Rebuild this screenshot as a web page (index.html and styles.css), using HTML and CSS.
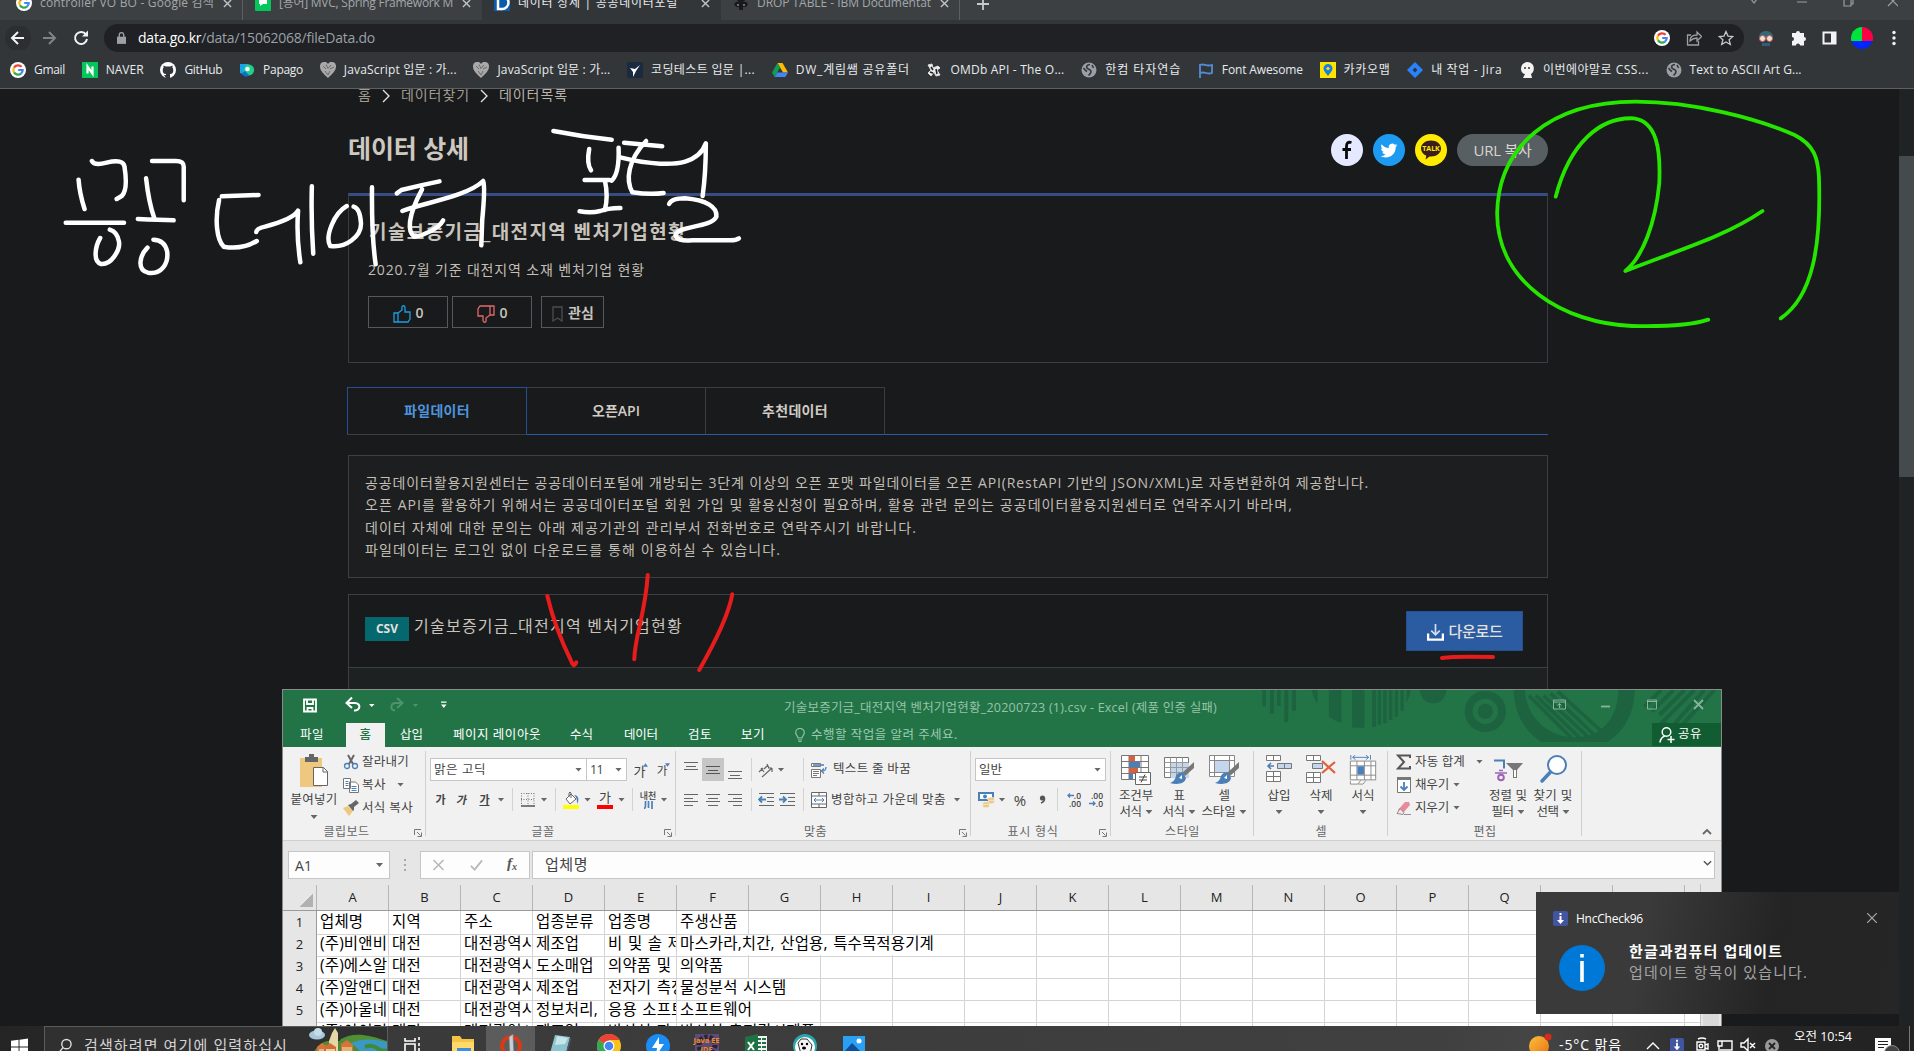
FILE: index.html
```html
<!DOCTYPE html>
<html lang="ko">
<head>
<meta charset="utf-8">
<title>데이터 상세 | 공공데이터포털</title>
<link rel="stylesheet" href="styles.css">
</head>
<body>
<svg class="defs" width="0" height="0">
  <defs>
    <symbol id="google" viewBox="0 0 16 16"><circle cx="8" cy="8" r="8" fill="#fff"/><g fill="none" stroke-width="2.2"><path d="M11.6 4.9A4.7 4.7 0 0 0 4 5.6" stroke="#ea4335"/><path d="M4 5.6a4.7 4.7 0 0 0 0 4.8" stroke="#fbbc05"/><path d="M4 10.4a4.7 4.7 0 0 0 7 1.2" stroke="#34a853"/><path d="M11 11.6A4.7 4.7 0 0 0 12.7 8H8.2" stroke="#4285f4"/></g></symbol>
    <symbol id="globe" viewBox="0 0 16 16"><circle cx="8" cy="8" r="7.500" fill="#9aa0a6"/><path d="M9 2.500c-3 0-4 2-3 3.500s4 1 4 3.500-2 3-2.500 4M2.500 6l2 2.500 1.500 1M11 3l1.500 3" fill="none" stroke="#35363a" stroke-width="1.600"/></symbol>
    <symbol id="heart" viewBox="0 0 16 16"><path d="M8 16C4 12 0 9 0 4.500A4.300 4.300 0 0 1 8 2a4.300 4.300 0 0 1 8 2.500C16 9 12 12 8 16z" fill="#a9a9a9"/><path d="M3 4l3 3M6 2.500l2 4 3-3.500M10 7l4-2M5 9l3 4 2-4" stroke="#6a6a6a" fill="none"/></symbol>
    <symbol id="x" viewBox="0 0 10 10"><path d="M1 1l8 8M9 1L1 9" fill="none" stroke="currentColor" stroke-width="1.500"/></symbol>
    <symbol id="launch" viewBox="0 0 8 8"><path d="M.5 6V.5H7M3 3l3.500 3.500M7.500 3.500v4h-4" fill="none" stroke="#777"/></symbol>
    <symbol id="brush" viewBox="0 0 30 30"><path d="M30 7v6l-9 8-3-3z" fill="#777"/><path d="M19 18a5 5 0 0 0-7 3c-1 4-3 6-6 7 7 2 15 1 16-5z" fill="#4a7fb8"/><path d="M18 20l-3 3 3 1z" fill="#fff"/></symbol>
    <symbol id="hnc" viewBox="0 0 15 15"><rect width="15" height="15" rx="2" fill="#4255a0"/><path d="M6.500 2h2v2h-2zM6.500 5h2v4H11l-3.500 4L4 9h2.500z" fill="#fff"/></symbol>
  </defs>
</svg>
<div class="screen">

<header class="browser">
  <div class="tabstrip">
    <div class="tab"><svg class="i16"><use href="#google"/></svg><span class="tx" data-w="174">controller VO BO - Google 검색</span><svg class="i9"><use href="#x"/></svg></div>
    <div class="tab"><svg class="i16" viewBox="0 0 16 16"><rect width="16" height="16" rx="1" fill="#03c75a"/><path d="M4 3h8v6H8l-3 2V9H4z" fill="#fff"/></svg><span class="tx" data-w="174">[용어] MVC, Spring Framework M</span><svg class="i9"><use href="#x"/></svg></div>
    <div class="tab active"><svg class="i16" viewBox="0 0 16 16"><rect width="16" height="16" fill="#0b5cab"/><path d="M4 1h4a6 6 0 0 1 0 13H4z" fill="none" stroke="#fff" stroke-width="2.500"/></svg><span class="tx" data-w="160">데이터 상세 | 공공데이터포털</span><svg class="i9"><use href="#x"/></svg></div>
    <div class="tab"><svg class="i16" viewBox="0 0 16 16"><path d="M1 9c2-4 12-4 14 0l-2 3H3zM4 6l2-2h4l2 2zM6 12h4v3H6z" fill="#17191a"/><circle cx="5" cy="10" r="1" fill="#888"/><circle cx="11" cy="10" r="1" fill="#888"/></svg><span class="tx" data-w="174">DROP TABLE - IBM Documentat</span><svg class="i9"><use href="#x"/></svg></div>
    <svg class="plus" viewBox="0 0 12 12"><path d="M6 0v12M0 6h12" stroke="#c8cbcd" stroke-width="1.800"/></svg>
    <svg class="winctl" viewBox="0 0 150 14"><g fill="none" stroke="#9a9ea2" stroke-width="1.200"><path d="M3 5l3 4 3-4M49 8h10M96 4h7v8h-7zM98 4V2h7v8h-2M140 2l10 10M150 2l-10 10"/></g></svg>
  </div>
  <div class="toolbar">
    <svg class="nav" viewBox="0 0 90 24"><circle cx="18" cy="12" r="13" fill="#2c2f32"/><g fill="none" stroke-width="2"><path d="M24 12H12.500M18 6l-6 6 6 6" stroke="#f1f3f4"/><path d="M43 12h12M49 6l6 6-6 6" stroke="#7f8488"/><path d="M86 8.500A6 6 0 1 0 87 13" stroke="#f1f3f4"/></g><path d="M88 4.500v6h-6z" fill="#f1f3f4"/></svg>
    <div class="omnibox">
      <svg class="lock" viewBox="0 0 10 14"><path d="M0 5h10v8H0z" fill="#9aa0a6"/><path d="M2.500 6V3a2.500 2.500 0 0 1 5 0v3" fill="none" stroke="#9aa0a6" stroke-width="1.500"/></svg>
      <span class="url" data-w="237"><b>data.go.kr</b>/data/15062068/fileData.do</span>
      <span class="grow"></span>
      <svg class="i16"><use href="#google"/></svg>
      <svg class="i16" viewBox="0 0 16 16"><path d="M5 5H1.500v10h11V11M4 11c0-4 3-6 7-6V2l4.500 4.500L11 11V8C8 8 6 9 4 11z" fill="none" stroke="#9aa0a6" stroke-width="1.300"/></svg>
      <svg class="i16" viewBox="0 0 16 16"><path d="M8 1.500l2 4.600 4.800.4-3.700 3.200 1.200 4.800L8 11.900l-4.300 2.600 1.200-4.800L1.200 6.500 6 6.100z" fill="none" stroke="#c3c7ca" stroke-width="1.300"/></svg>
    </div>
    <div class="exts">
      <svg class="i16" viewBox="0 0 16 16"><path d="M1 7c0-8 14-8 14 0z" fill="#33677a"/><circle cx="4.500" cy="8.500" r="3" fill="#e8e2e0" stroke="#d05b45"/><circle cx="11.500" cy="8.500" r="3" fill="#e8e2e0" stroke="#d05b45"/><path d="M4 13h8v3H4z" fill="#2f5f80"/></svg>
      <svg class="i16" viewBox="0 0 16 16"><path d="M2 3h4a2 2 0 1 1 4 0h4v4a2 2 0 1 1 0 4v4.500h-4a2 2 0 0 0-4 0H2V11a2 2 0 0 0 0-4z" fill="#f1f3f4"/></svg>
      <svg class="i16" viewBox="0 0 16 16"><path d="M1.500 2.500h12v11h-12z" fill="none" stroke="#f1f3f4" stroke-width="2"/><path d="M9 2h5v12H9z" fill="#f1f3f4"/></svg>
      <svg class="avatar" viewBox="0 0 22 22"><path d="M11 14V0A11 11 0 0 0 .4 14z" fill="#00e23c"/><path d="M11 14V0a11 11 0 0 1 10.600 14z" fill="#ff0044"/><path d="M.4 14h21.200A11 11 0 0 1 .4 14z" fill="#0026ff"/></svg>
      <svg class="dots" viewBox="0 0 4 16"><g fill="#f1f3f4"><circle cx="2" cy="2.500" r="1.700"/><circle cx="2" cy="8" r="1.700"/><circle cx="2" cy="13.500" r="1.700"/></g></svg>
    </div>
  </div>
  <nav class="bookmarks">
    <a><svg class="i16"><use href="#google"/></svg><span data-w="31">Gmail</span></a>
    <a><svg class="i16" viewBox="0 0 16 16"><rect width="16" height="16" fill="#03c75a"/><path d="M5.500 11.500v-7l5 7v-7" fill="none" stroke="#fff" stroke-width="2.200"/></svg><span data-w="38">NAVER</span></a>
    <a><svg class="i16" viewBox="0 0 16 16"><circle cx="8" cy="8" r="8" fill="#fff"/><path d="M6 16v-3c-2 .5-2.500-.5-3-1.300M10 16v-4c2.500 0 3.300-1.500 3.300-4 0-1-.4-1.800-.8-2.200V3.500L10.300 4.500H5.700L3.500 3.500v2.300C3 6.300 2.700 7 2.700 8c0 2.500.9 4 3.300 4v4z" fill="#323639"/></svg><span data-w="38">GitHub</span></a>
    <a><svg class="i16" viewBox="0 0 16 16"><path d="M1 2h8l5 5-3 1-2 6-8-3z" fill="#19a5e8"/><path d="M7 3a5 5 0 0 1 5 10l-5 1-3-6z" fill="#20d08a"/><path d="M2 12l5 3 3-2-4-4z" fill="#0b6fd0"/><circle cx="8.500" cy="7" r="2.300" fill="#fff"/></svg><span data-w="40">Papago</span></a>
    <a><svg class="i16"><use href="#heart"/></svg><span data-w="113">JavaScript 입문 : 가...</span></a>
    <a><svg class="i16"><use href="#heart"/></svg><span data-w="113">JavaScript 입문 : 가...</span></a>
    <a><svg class="i16" viewBox="0 0 16 16"><rect width="16" height="16" rx="2" fill="#1b2a41"/><path d="M3 6l5 1 5-4-4 6-3 6 0-5z" fill="#fff"/></svg><span data-w="104">코딩테스트 입문 |...</span></a>
    <a><svg class="i16" viewBox="0 0 16 16"><path d="M5.500 1h5L16 10.500h-5z" fill="#fbbc04"/><path d="M5.500 1L0 10.500 2.700 15 8 5.500z" fill="#0f9d58"/><path d="M2.700 15L5.300 10.500H16L13.300 15z" fill="#4285f4"/></svg><span data-w="114">DW_계림쌤 공유폴더</span></a>
    <a><svg class="i16" viewBox="0 0 16 16"><path d="M2 3l4-1 1 4 5-2 2 2-3 2 3 5-4 1-2-4-3 4-3-3 3-3z" fill="#eee" stroke="#ddd"/><path d="M5 5l2 3M10 7l1 5M4 10l3 1" stroke="#222" stroke-width="1.600"/></svg><span data-w="114">OMDb API - The O...</span></a>
    <a><svg class="i16"><use href="#globe"/></svg><span data-w="76">한컴 타자연습</span></a>
    <a><svg class="i16" viewBox="0 0 16 16"><path d="M2 16V2M2 3c4-2 6 2 12 0v8c-5 2-7-2-12 0" fill="none" stroke="#528dd7" stroke-width="1.800"/></svg><span data-w="81">Font Awesome</span></a>
    <a><svg class="i16" viewBox="0 0 16 16"><rect width="16" height="16" fill="#fee500"/><path d="M8 14C4 9 3.500 8 3.500 6.500a4.500 4.500 0 0 1 9 0C12.500 8 12 9 8 14z" fill="#1a7fe0"/><circle cx="8" cy="6.500" r="1.600" fill="#fee500"/></svg><span data-w="47">카카오맵</span></a>
    <a><svg class="i16" viewBox="0 0 16 16"><path d="M8 0l8 8-8 8-8-8z" fill="#2684ff"/><path d="M8 5.500L10.500 8 8 10.500 5.500 8z" fill="#323639"/></svg><span data-w="71">내 작업 - Jira</span></a>
    <a><svg class="i16" viewBox="0 0 16 16"><path d="M3 3c3-4 8-4 11 0 2 4 0 8-2 9l1 4H4l2-4C2 11 1 7 3 3z" fill="#f4f4f4"/><circle cx="6" cy="6" r="1" fill="#333"/><circle cx="10" cy="6" r="1" fill="#333"/></svg><span data-w="106">이번에야말로 CSS...</span></a>
    <a><svg class="i16"><use href="#globe"/></svg><span data-w="112">Text to ASCII Art G...</span></a>
  </nav>
</header>

<main class="viewport">
  <div class="page">
    <div class="crumbs"><span data-w="14">홈</span><svg viewBox="0 0 8 14"><path d="M1 1l6 6-6 6"/></svg><span data-w="69">데이터찾기</span><svg viewBox="0 0 8 14"><path d="M1 1l6 6-6 6"/></svg><span class="here" data-w="69">데이터목록</span></div>
    <div class="head">
      <h1 data-w="121">데이터 상세</h1>
      <div class="share">
        <svg viewBox="0 0 32 32"><circle cx="16" cy="16" r="16" fill="#e4e9ff"/><path d="M20.500 8.500c-4-1-5 1-5 4V25M11.500 15.500h8.500" fill="none" stroke="#0a0a0a" stroke-width="2.800"/></svg>
        <svg viewBox="0 0 32 32"><circle cx="16" cy="16" r="16" fill="#1d9bf0"/><path d="M24.500 11.200c-.6.300-1.300.5-2 .6.700-.5 1.200-1.100 1.500-1.900-.7.400-1.400.7-2.200.8a3.500 3.500 0 0 0-6 3.200c-2.900-.1-5.500-1.500-7.200-3.700-.9 1.700-.4 3.600 1.100 4.700-.6 0-1.100-.2-1.600-.4 0 1.800 1.200 3.200 2.800 3.500-.5.100-1 .2-1.600.1.400 1.400 1.700 2.400 3.300 2.400A7 7 0 0 1 7.500 22c5.700 3.400 15.300.7 15.200-9 .7-.5 1.300-1.100 1.800-1.800z" fill="#fff"/></svg>
        <div class="talk"><svg viewBox="0 0 32 32"><circle cx="16" cy="16" r="16" fill="#ffeb00"/><path d="M16 6.500c5.600 0 10 3.500 10 8s-4.400 8-10 8l-1.500 0-4 3 .8-3.800C8.100 20.400 6 17.700 6 14.500c0-4.500 4.400-8 10-8z" fill="#3b1d1d"/></svg><b>TALK</b></div>
        <button><span data-w="58">URL 복사</span></button>
      </div>
    </div>
    <section class="summary">
      <h2 data-w="318">기술보증기금_대전지역 벤처기업현황</h2>
      <p data-w="277">2020.7월 기준 대전지역 소재 벤처기업 현황</p>
      <div class="votes">
        <span class="vote"><svg viewBox="0 0 18 18"><path d="M1 8h4v9H1zM5 8l4-3V2c0-2 3-1.500 3 .5V7h5v7l-2 3H5" fill="none" stroke="#1d9fe0" stroke-width="1.300"/></svg>0</span>
        <span class="vote"><svg viewBox="0 0 18 18"><path d="M17 10h-4V1h4zM13 10l-4 3v3c0 2-3 1.500-3-.5V11H1V4l2-3h10" fill="none" stroke="#e06a6a" stroke-width="1.300"/></svg>0</span>
        <span class="vote keep"><svg viewBox="0 0 12 16"><path d="M1 1h9v14l-4.500-3L1 15z" fill="none" stroke="#4a4e50" stroke-width="1.300"/></svg><span data-w="26">관심</span></span>
      </div>
    </section>
    <div class="tabs"><span class="on"><i data-w="66">파일데이터</i></span><span><i data-w="48">오픈API</i></span><span><i data-w="66">추천데이터</i></span><em></em></div>
    <section class="note">
      <p data-w="1004">공공데이터활용지원센터는 공공데이터포털에 개방되는 3단계 이상의 오픈 포맷 파일데이터를 오픈 API(RestAPI 기반의 JSON/XML)로 자동변환하여 제공합니다.</p>
      <p data-w="928">오픈 API를 활용하기 위해서는 공공데이터포털 회원 가입 및 활용신청이 필요하며, 활용 관련 문의는 공공데이터활용지원센터로 연락주시기 바라며,</p>
      <p data-w="552">데이터 자체에 대한 문의는 아래 제공기관의 관리부서 전화번호로 연락주시기 바랍니다.</p>
      <p data-w="416">파일데이터는 로그인 없이 다운로드를 통해 이용하실 수 있습니다.</p>
    </section>
    <section class="file">
      <div class="filehead">
        <span class="csv">CSV</span><span class="fname" data-w="269">기술보증기금_대전지역 벤처기업현황</span>
        <button class="dl"><svg viewBox="0 0 18 18"><path d="M9 0v10M4.500 7L9 11.500 13.500 7" fill="none" stroke="#cfe0f5" stroke-width="1.800"/><path d="M1.200 10v6.500h15.600V10" fill="none" stroke="#fff" stroke-width="2.400"/></svg><span data-w="54">다운로드</span></button>
      </div>
    </section>
  </div>
  <div class="scroll"><div class="thumb"></div></div>
</main>

<svg class="ink" viewBox="0 0 1914 700">
  <g class="white" transform="translate(40 80) scale(.4592 .33333)">
    <path d="M113 243Q118 258 145 248Q182 236 184 260Q192 330 178 348L167 357M84 299Q86 340 97 387M56 428H183M131 474C120 500 115 545 133 552C155 555 175 510 172 485Q168 455 152 449"/>
    <path d="M244 243H296Q314 243 313 262V361M231 295Q237 370 249 415M213 417Q260 420 291 421M234 503C215 530 212 570 235 578C265 585 280 550 277 515Q272 480 247 479"/>
    <path d="M396 349L476 345M390 360C380 420 385 480 400 500Q440 510 472 483M471 456Q472 445 490 440C530 425 555 410 562 392Q558 470 567 547M592 319Q590 420 595 521"/>
    <path d="M668 378C640 400 620 470 632 498C665 505 700 470 699 430Q697 385 683 380M723 322Q722 470 731 553"/>
    <path d="M777 340L787 330Q830 315 870 304M832 328C800 410 800 455 815 470C840 465 868 445 878 421M789 393C830 370 930 350 965 303Q970 320 963 420L961 496"/>
    <path d="M1118 153Q1180 170 1245 179M1196 207Q1190 250 1200 271M1260 203Q1262 280 1245 302M1186 300H1240M1230 300Q1238 350 1230 390M1175 394Q1200 400 1220 393Q1235 385 1264 384"/>
    <path d="M1272 188L1355 199M1320 183C1280 240 1275 300 1290 337Q1330 345 1358 339M1266 233C1330 255 1380 255 1405 245Q1440 230 1450 190Q1450 280 1443 348M1370 372Q1375 355 1405 355C1450 360 1475 380 1473 410C1460 445 1390 435 1384 465Q1385 485 1420 481H1500Q1515 482 1522 475"/>
  </g>
  <g class="green" transform="translate(1300 80) scale(.35714 .33333)">
    <path d="M1143 719C1090 738 1010 740 930 738C740 730 552 610 552 400C555 200 700 65 940 65C1100 65 1280 115 1385 165C1440 195 1450 235 1453 290C1460 500 1435 650 1346 715"/>
    <path d="M716 350C755 190 840 110 935 115C1000 125 1010 210 1006 310C995 430 960 530 911 573C1060 510 1190 470 1295 393"/>
  </g>
  <g class="red" transform="translate(340 380) scale(.40816 .33333)">
    <path d="M508 648C520 710 545 790 567 845Q573 865 579 847M754 585C748 700 722 770 721 838M961 643Q950 720 880 870"/>
  </g>
  <path class="red" d="M1442 658Q1455 656 1493 657"/>
</svg>

<section class="excel">
  <div class="xtitle">
    <svg class="deco" viewBox="0 15 1445 171" preserveAspectRatio="none"><g fill="#1d6340"><path d="M67 15h11v49H67zM90 15h12v72H90zM111 15h11v48h-11zM133 15h12v97h-12zM156 15h12v62h-12z"/><path d="M215 15h18v40Q220 40 215 15zM267 15h38v100q-22-8-38-20zM337 15h37v113h-37zM397 15h12v110h-12zM414 15h10v104h-10zM430 15h11v100h-11zM447 15h11v90h-11zM465 15h10v80h-10zM482 15h10v62h-10zM500 15h14q-4 20-14 38z"/><path d="M539 15h82q-8 40-41 40t-41-40z"/><circle cx="737" cy="79" r="23"/><path d="M822 15h34C858 90 920 155 1003 157S1135 100 1137 15h49C1184 80 1160 135 1104 171H905C850 135 824 80 822 15z"/></g><circle cx="737" cy="79" r="50" fill="none" stroke="#1d6340" stroke-width="24"/><path d="M868 32L995 158M889 32L1020 158M912 32L1045 155M933 25L1065 150M955 20L1085 138" fill="none" stroke="#1d6340" stroke-width="11"/><path d="M1215 65l50-50M1237 80l65-65M1260 90l75-75M1250 130l115-115M1240 150l40-40M1285 140l110-125M1310 140l115-125" stroke="#1d6340" stroke-width="12"/></svg>
    <div class="xbar">
      <svg class="qat" viewBox="283 0 170 30"><g fill="none" stroke="#fff" stroke-width="2"><path d="M304 9.500h12v12h-12zM307 10v4h6v-4M307.500 22v-4h5v4" stroke-width="1.800"/><path d="M347 13h8c6 0 6 8-1 7.500M352 7.500l-5.500 5.500 5.500 5"/><path d="M402 13h-6c-6 0-6 7-1 7.500M397 8l5.500 5-5.500 5" stroke="#4f9270"/></g><path d="M369 14h5.500l-2.700 3z" fill="#fff"/><path d="M413 14h5l-2.500 3z" fill="#4f9270"/><path d="M441 14.500h5.500l-2.700 3.500zM441 11.500h5.500v1.300H441z" fill="#fff"/></svg>
      <span class="xname" data-w="433">기술보증기금_대전지역 벤처기업현황_20200723 (1).csv - Excel (제품 인증 실패)</span>
      <svg class="xctl" viewBox="0 0 154 14"><g fill="none" stroke="#86b59b"><path d="M.5 2h12v9H.5zM.5 4h12M6.500 10V5.500M4.500 7.500l2-2 2 2"/><path d="M48 8.500h9" stroke-width="1.800"/><path d="M94.500 2h9v9h-9zM94.500 3.500h9"/><path d="M141 2l9 9M150 2l-9 9" stroke-width="1.800"/></g></svg>
    </div>
    <div class="xtabs">
      <span class="t1" data-w="24">파일</span><b><i data-w="12">홈</i></b><span class="t2" data-w="23">삽입</span><span class="t3" data-w="88">페이지 레이아웃</span><span class="t4" data-w="23">수식</span><span class="t5" data-w="34">데이터</span><span class="t6" data-w="24">검토</span><span class="t7" data-w="24">보기</span>
      <svg class="bulb" viewBox="0 0 10 14"><path d="M3 10C3 8 .7 7 .7 4.700a4.300 4.300 0 0 1 8.600 0C9.300 7 7 8 7 10zM3 12h4M3.500 13.500h3" fill="none" stroke="#8fc1a2" stroke-width="1.200"/></svg>
      <span class="tell" data-w="147">수행할 작업을 알려 주세요.</span>
      <span class="xshare"><svg viewBox="0 0 16 16"><circle cx="7.500" cy="5" r="4.300"/><path d="M1 15.500c.5-4 3-6 5-6.500M12 9v7M8.500 12.500h7"/></svg><i data-w="24">공유</i></span>
    </div>
  </div>

  <div class="ribbon">
    <div class="grp g1"><div class="body row">
      <div class="big w60"><svg viewBox="0 0 30 38"><path d="M1 4h22v29H1z" fill="#edc87e"/><path d="M6 8V3h4V0h5v3h4v5z" fill="#666"/><path d="M14.500 13.500h10l4 4v14h-14z" fill="#fff" stroke="#666"/><path d="M24 13.500V18h4.500" fill="none" stroke="#666"/></svg><span data-w="47">붙여넣기</span><i class="car"></i></div>
      <div class="list">
        <div><svg viewBox="0 0 16 16"><path d="M5 1l5 9M11 1l-5 9" stroke="#666" stroke-width="2"/><g fill="none" stroke="#4a7fb8" stroke-width="1.300"><circle cx="4" cy="12" r="2.500"/><circle cx="12" cy="12" r="2.500"/></g></svg><span data-w="47">잘라내기</span></div>
        <div><svg viewBox="0 0 16 16"><path d="M.5 1.500h7v10h-7zM6.500 5h6l3 3v7.500h-9z" fill="#fff" stroke="#777"/><path d="M2.500 4.500h3M2.500 6.500h3M2.500 8.500h3M8.500 9.500h5M8.500 11.500h5M8.500 13.500h5" stroke="#4a7fb8"/></svg><span data-w="24">복사</span><i class="car m9"></i></div>
        <div><svg viewBox="0 0 16 16"><path d="M0 8l5-2 5 5-4 5z" fill="#edc87e"/><path d="M5 5l3-1 5-4 3 3-5 4 0 3-1 1z" fill="#666"/></svg><span data-w="51">서식 복사</span></div>
      </div></div>
      <div class="lab"><span data-w="46">클립보드</span><svg><use href="#launch"/></svg></div></div>

    <div class="grp g2"><div class="body">
      <div class="r1"><span class="combo w157"><i data-w="52">맑은 고딕</i><i class="car"></i></span><span class="combo w40"><i data-w="13">11</i><i class="car"></i></span><span class="c w27 ga big">가<svg viewBox="0 0 6 4"><path d="M0 4l3-4 3 4z" fill="#4a7fb8"/></svg></span><span class="c w17 ga">가<svg viewBox="0 0 6 4"><path d="M0 0l3 4 3-4z" fill="#4a7fb8"/></svg></span></div>
      <div class="r2"><b class="c w21">가</b><b class="c w22 it">가</b><b class="c w23 un"><u>가</u></b><span class="c w10"><i class="car"></i></span><span class="c w12"><i class="sep"></i></span>
        <span class="c w20"><svg width="14" height="14" viewBox="0 0 14 14"><path d="M.5 0v13M7 0v13M13 0v13M0 .5h13M0 6.500h13" stroke="#777" stroke-dasharray="1 1.500"/><path d="M0 13h14" stroke="#555" stroke-width="1.500"/></svg></span><span class="c w12"><i class="car"></i></span><span class="c w10"><i class="sep"></i></span>
        <span class="c w22"><svg width="17" height="18" viewBox="0 0 17 18"><path d="M8 3l5 5-6 5-4-5z" fill="#fff" stroke="#666"/><path d="M6 6V2q1-2 2 0v5" fill="none" stroke="#666"/><path d="M11 4c4 0 6 4 3 9 0-4 0-6-3-9z" fill="#4a7fb8"/><path d="M0 14h16v4H0z" fill="#ff0"/></svg></span><span class="c w11"><i class="car"></i></span>
        <span class="c w24 fc">가<i></i></span><span class="c w9"><i class="car"></i></span><span class="c w12"><i class="sep"></i></span>
        <span class="c w20 nc">내천<svg viewBox="0 0 9 8"><path d="M1.500 0v4q0 3-1.500 4M4.500 0v7M8 0v8" fill="none" stroke="#4a7fb8" stroke-width="1.700"/></svg></span><span class="c w12"><i class="car"></i></span></div></div>
      <div class="lab"><span data-w="23">글꼴</span><svg><use href="#launch"/></svg></div></div>

    <div class="grp g3"><div class="body">
      <div class="r1"><span class="c w22"><svg width="14" height="20" viewBox="0 0 14 20"><path d="M0 2.500h14M2 6.500h10M0 9.500h14" stroke="#666"/></svg></span><span class="c w22 on"><svg width="14" height="20" viewBox="0 0 14 20"><path d="M0 6.500h14M2 10.500h10M0 13.500h14" stroke="#555"/></svg></span><span class="c w22"><svg width="14" height="20" viewBox="0 0 14 20"><path d="M0 11.500h14M2 15.500h10M0 18.500h14" stroke="#666"/></svg></span><span class="c w10"><i class="sep"></i></span>
        <span class="c w20"><svg width="16" height="16" viewBox="0 0 16 16"><path d="M1 10l4-4M3 6l3 4M6 7l4-4M9 2l2 4M4 15L14 6M14 6v4M14 6h-4" fill="none" stroke="#666" stroke-width="1.200"/></svg></span><span class="c w10"><i class="car"></i></span><span class="c w12"></span><span class="c w10"><i class="sep"></i></span>
        <span class="c w22"><svg width="16" height="16" viewBox="0 0 16 16"><path d="M.5 1.500h9v3h-9zM.5 7.500h9v8h-9z" fill="#fff" stroke="#777"/><path d="M2 9.500h6M2 11.500h6M2 13.500h4" stroke="#777"/><path d="M2 3h11M15 5c0 4-2 4-4 4M13 6.500L10.500 9l2.500 2.500" fill="none" stroke="#4a7fb8" stroke-width="1.300"/></svg></span><span class="txt" data-w="78">텍스트 줄 바꿈</span></div>
      <div class="r2"><span class="c w22"><svg width="14" height="12" viewBox="0 0 14 12"><path d="M0 .5h14M0 4.500h9M0 7.500h14M0 11.500h9" stroke="#666"/></svg></span><span class="c w22"><svg width="14" height="12" viewBox="0 0 14 12"><path d="M0 .5h14M2 4.500h10M0 7.500h14M2 11.500h10" stroke="#666"/></svg></span><span class="c w22"><svg width="14" height="12" viewBox="0 0 14 12"><path d="M0 .5h14M5 4.500h9M0 7.500h14M5 11.500h9" stroke="#666"/></svg></span><span class="c w10"><i class="sep"></i></span>
        <span class="c w20"><svg width="16" height="13" viewBox="0 0 16 13"><path d="M1 .5h15M9 4.500h7M9 8.500h7M1 12.500h15" stroke="#666"/><path d="M8 6.500H1M4 3.500l-3 3 3 3" fill="none" stroke="#4a7fb8" stroke-width="1.800"/></svg></span><span class="c w22"><svg width="16" height="13" viewBox="0 0 16 13"><path d="M1 .5h15M9 4.500h7M9 8.500h7M1 12.500h15" stroke="#666"/><path d="M0 6.500h7M4 3.500l3 3-3 3" fill="none" stroke="#4a7fb8" stroke-width="1.800"/></svg></span><span class="c w10"><i class="sep"></i></span>
        <span class="c w22"><svg width="16" height="16" viewBox="0 0 16 16"><path d="M.5.500h15v15H.5zM.5 4h15M.5 12h15M8 .5V4M8 12v3.500" fill="#fff" stroke="#666"/><path d="M3 8h10M5 6L3 8l2 2M11 6l2 2-2 2" fill="none" stroke="#4a7fb8"/></svg></span><span class="txt t-merge" data-w="115">병합하고 가운데 맞춤</span><span class="c w22"><i class="car"></i></span></div></div>
      <div class="lab"><span data-w="23">맞춤</span><svg><use href="#launch"/></svg></div></div>

    <div class="grp g4"><div class="body">
      <div class="r1"><span class="combo w131"><i data-w="23">일반</i><i class="car"></i></span></div>
      <div class="r2"><span class="c w22"><svg width="17" height="17" viewBox="0 0 17 17"><path d="M0 1h16v9H0z" fill="#4a7fb8"/><path d="M2 3h12v5H2z" fill="#fff"/><circle cx="7" cy="5.500" r="2" fill="#4a7fb8"/><g fill="#edc87e" stroke="#f1f1f1" stroke-width=".7"><ellipse cx="13" cy="8" rx="3.500" ry="1.800"/><ellipse cx="13" cy="11" rx="3.500" ry="1.800"/><ellipse cx="8" cy="12.500" rx="3.500" ry="1.800"/><ellipse cx="8" cy="15" rx="3.500" ry="1.800"/></g></svg></span><span class="c w10"><i class="car"></i></span><span class="c w26 pct">%</span><span class="c w18"><svg width="7" height="9" viewBox="0 0 7 9"><circle cx="3.500" cy="3" r="2.600" fill="#555"/><path d="M5.500 3q.5 3.500-3.500 5" fill="none" stroke="#555" stroke-width="1.400"/></svg></span><span class="c w12"><i class="sep"></i></span><span class="c w18 dec"><span><svg width="7" height="5" viewBox="0 0 7 5"><path d="M7 2.500H1M3 .5l-2 2 2 2" fill="none" stroke="#4a7fb8" stroke-width="1.300"/></svg>.0</span><span>.00</span></span><span class="c w4"></span><span class="c w18 dec"><span>.00</span><span><svg width="7" height="5" viewBox="0 0 7 5"><path d="M0 2.500h6M4 .5l2 2-2 2" fill="none" stroke="#4a7fb8" stroke-width="1.300"/></svg>.0</span></span></div></div>
      <div class="lab"><span data-w="51">표시 형식</span><svg><use href="#launch"/></svg></div></div>

    <div class="grp g5"><div class="body row">
      <div class="big w46"><svg viewBox="0 0 30 30"><path d="M.5.500h27v24H.5zM.5 6.500h27M.5 12.500h27M.5 18.500h27M8 .5v24M20 .5v24" fill="#fff" stroke="#777"/><path d="M8 1h6v5H8zM8 13h9v5H8z" fill="#d9603f"/><path d="M8 7h11v5H8zM8 19h4v5H8z" fill="#4a7fb8"/><path d="M14.500 17.500h15v12h-15z" fill="#fff" stroke="#666"/><path d="M18 22h8M18 25h8M24 19.500l-4 8" stroke="#444"/></svg><span data-w="34">조건부</span><span class="wc"><i data-w="22">서식</i><i class="car"></i></span></div>
      <div class="big w40"><svg viewBox="0 0 30 30"><path d="M.5 2.500h24v20H.5z" fill="#fff" stroke="#777"/><path d="M7 8h18v15H7z" fill="#c3d6eb"/><path d="M.5 7.500h24M.5 12.500h24M.5 17.500h24M6.500 2.500v20M12.500 2.500v20M18.500 2.500v20" stroke="#999" fill="none"/><use href="#brush"/></svg><span data-w="11">표</span><span class="wc"><i data-w="22">서식</i><i class="car"></i></span></div>
      <div class="big w50"><svg viewBox="0 0 30 30"><path d="M.5.500h25v21H.5zM.5 5.500h25M.5 17.500h25M5.500.500v21M20.500.500v21" fill="#fff" stroke="#888"/><path d="M6 6h14v11H6z" fill="#c3d6eb"/><use href="#brush"/></svg><span data-w="11">셀</span><span class="wc"><i data-w="34">스타일</i><i class="car"></i></span></div></div>
      <div class="lab"><span data-w="35">스타일</span></div></div>

    <div class="grp g6"><div class="body row">
      <div class="big w42"><svg viewBox="0 0 30 30"><path d="M2.500.500h14v5h-14zM9.500.500v5M2.500 16.500h14v10h-14zM2.500 21.500h14M9.500 16.500v10" fill="#fff" stroke="#777"/><path d="M13.500 8.500h14v5h-14zM20.500 8.500v5" fill="#c3d6eb" stroke="#777"/><path d="M10 11H4M7 8l-3 3 3 3" fill="none" stroke="#4a7fb8" stroke-width="1.600"/></svg><span data-w="23">삽입</span><i class="car"></i></div>
      <div class="big w42"><svg viewBox="0 0 30 30"><path d="M.5.500h14v5H.5zM7.500.500v5M.5 17.500h14v10H.5zM.5 22.500h14M7.500 17.500v10" fill="#fff" stroke="#777"/><path d="M6.500 8.500h10v5h-10z" fill="#c3d6eb" stroke="#777"/><path d="M16 6l13 12M29 7L16 18" stroke="#e0603c" stroke-width="2.200"/></svg><span data-w="23">삭제</span><i class="car"></i></div>
      <div class="big w42"><svg viewBox="0 0 30 32"><path d="M1.500 6.500h27v20h-27zM1.500 11.500h27M1.500 21.500h27M8.500 6.500v20M16.500 6.500v20M23.500 6.500v20M1.500 28v3h8l3-4M10 31h5l3-4" fill="#fff" stroke="#888"/><path d="M9 12h7v9H9z" fill="#4a7fb8"/><path d="M2 0v5M23 0v5M4 2.500h17M7 0L4 2.500 7 5M18 0l3 2.500L18 5" fill="none" stroke="#4a7fb8"/></svg><span data-w="23">서식</span><i class="car"></i></div></div>
      <div class="lab"><span data-w="11">셀</span></div></div>

    <div class="grp g7"><div class="body row">
      <div class="list">
        <div><svg viewBox="0 0 16 16"><path d="M14 4V1.500H2L8 8l-6 6.500h12V12" fill="none" stroke="#555" stroke-width="2"/></svg><span data-w="50">자동 합계</span><i class="car m9"></i></div>
        <div><svg viewBox="0 0 16 16"><path d="M1.500.500h13v15h-13z" fill="#fff" stroke="#777"/><path d="M1 0h14v3H1z" fill="#777"/><path d="M8 5v8M4.500 9.500L8 13l3.500-3.500" fill="none" stroke="#4a7fb8" stroke-width="1.800"/></svg><span data-w="34">채우기</span><i class="car m4"></i></div>
        <div><svg viewBox="0 0 16 16"><path d="M2 10L9 2h4l1 3-7 8H4z" fill="#e98a9c"/><path d="M1 13.500l3-5 4 4-1 2zM8 14.500h7" stroke="#777" fill="#fbe3e8" stroke-width=".8"/></svg><span data-w="34">지우기</span><i class="car m4"></i></div>
      </div>
      <div class="big w46"><svg viewBox="0 0 30 30"><path d="M1 5.500h10v8" fill="none" stroke="#4a7fb8" stroke-width="2"/><path d="M6 15.500h4M2 18h12" stroke="#9a63b8" stroke-width="1.600"/><circle cx="8" cy="22.500" r="2.800" fill="none" stroke="#9a63b8" stroke-width="2"/><path d="M13 8h17l-6 7v8h-4v-8z" fill="#777"/><path d="M21 15v7h2v-7z" fill="#fff"/></svg><span data-w="38">정렬 및</span><span class="wc"><i data-w="22">필터</i><i class="car"></i></span></div>
      <div class="big w44"><svg viewBox="0 0 30 30"><circle cx="19" cy="10" r="9" fill="#fff" stroke="#4a7fb8" stroke-width="2"/><path d="M12.500 17L4 26" stroke="#4a7fb8" stroke-width="3.500" stroke-linecap="round"/></svg><span data-w="39">찾기 및</span><span class="wc"><i data-w="22">선택</i><i class="car"></i></span></div></div>
      <div class="lab"><span data-w="23">편집</span></div></div>
    <svg class="collapse" viewBox="0 0 10 7"><path d="M1 6l4-4 4 4" fill="none" stroke="#666" stroke-width="1.800"/></svg>
  </div>

  <div class="fbar">
    <span class="nbox"><i data-w="17">A1</i><i class="car"></i></span>
    <svg class="fdots" viewBox="0 0 2 12"><path d="M0 0h2v2H0zM0 5h2v2H0zM0 10h2v2H0z" fill="#a8a8a8"/></svg>
    <span class="fbtn"><svg viewBox="0 0 12 12"><path d="M1 1l10 10M11 1L1 11" stroke="#b9b9b9" stroke-width="1.600"/></svg><svg viewBox="0 0 14 12"><path d="M1 7l4 4 8-10" fill="none" stroke="#b9b9b9" stroke-width="2"/></svg><em>f<sub>x</sub></em></span>
    <span class="fval"><i data-w="43">업체명</i><svg viewBox="0 0 10 7"><path d="M1 1l4 4 4-4" fill="none" stroke="#555" stroke-width="1.600"/></svg></span>
  </div>

  <div class="sheetwrap">
    <div class="sheet">
      <div class="hr"><span class="corner"></span><span>A</span><span>B</span><span>C</span><span>D</span><span>E</span><span>F</span><span>G</span><span>H</span><span>I</span><span>J</span><span>K</span><span>L</span><span>M</span><span>N</span><span>O</span><span>P</span><span>Q</span><span></span><span></span><span></span></div>
      <div class="sr"><b>1</b><span>업체명</span><span>지역</span><span>주소</span><span>업종분류</span><span>업종명</span><span>주생산품</span><span></span><span></span><span></span><span></span><span></span><span></span><span></span><span></span><span></span><span></span><span></span><span></span><span></span><span></span></div>
      <div class="sr"><b>2</b><span>(주)비앤비</span><span>대전</span><span>대전광역시</span><span>제조업</span><span>비 및 솔 제</span><span class="s4">마스카라,치간, 산업용, 특수목적용기계</span><span></span><span></span><span></span><span></span><span></span><span></span><span></span><span></span><span></span><span></span><span></span></div>
      <div class="sr"><b>3</b><span>(주)에스알</span><span>대전</span><span>대전광역시</span><span>도소매업</span><span>의약품 및</span><span>의약품</span><span></span><span></span><span></span><span></span><span></span><span></span><span></span><span></span><span></span><span></span><span></span><span></span><span></span><span></span></div>
      <div class="sr"><b>4</b><span>(주)알앤디</span><span>대전</span><span>대전광역시</span><span>제조업</span><span>전자기 측정</span><span class="s2">물성분석 시스템</span><span></span><span></span><span></span><span></span><span></span><span></span><span></span><span></span><span></span><span></span><span></span><span></span><span></span></div>
      <div class="sr"><b>5</b><span>(주)아울네</span><span>대전</span><span>대전광역시</span><span>정보처리,</span><span>응용 소프트</span><span class="s2">소프트웨어</span><span></span><span></span><span></span><span></span><span></span><span></span><span></span><span></span><span></span><span></span><span></span><span></span><span></span></div>
      <div class="sr"><b></b><span>(주)아이리</span><span>대전</span><span>대전광역시</span><span>제조업</span><span>방사선 장</span><span class="s2">방사선 측정감시제품</span><span></span><span></span><span></span><span></span><span></span><span></span><span></span><span></span><span></span><span></span><span></span><span></span><span></span></div>
    </div>
    <div class="xscroll"><i></i></div>
  </div>
</section>

<aside class="toast">
  <div class="thead"><svg class="i15"><use href="#hnc"/></svg><span data-w="67">HncCheck96</span><svg class="tx-close" viewBox="0 0 10 10"><path d="M0 0l10 10M10 0L0 10" stroke="#aaa" stroke-width="1.200"/></svg></div>
  <div class="tbody">
    <svg class="info" viewBox="0 0 46 46"><circle cx="23" cy="23" r="23" fill="#0078d7"/><path d="M21.200 9h3.600v3.500h-3.600zM21.200 16h3.600v21h-3.600z" fill="#fff"/></svg>
    <div><strong data-w="154">한글과컴퓨터 업데이트</strong><p data-w="179">업데이트 항목이 있습니다.</p></div>
  </div>
</aside>

<footer class="taskbar">
  <div class="start"><svg viewBox="0 0 18 18"><path d="M0 2.500l8-1.200V8.500H0zM9 1.200L18 0v8.500H9zM0 9.500h8v7.200L0 15.500zM9 9.500h9V18l-9-1.200z" fill="#fff"/></svg></div>
  <div class="search">
    <svg class="mag" viewBox="0 0 14 16"><circle cx="8" cy="6" r="5" fill="none" stroke="#ddd" stroke-width="1.500"/><path d="M4.500 9.500L0 15" stroke="#ddd" stroke-width="1.500"/></svg>
    <span data-w="204">검색하려면 여기에 입력하십시</span>
    <svg class="art" viewBox="0 0 78 30"><path d="M32 12c12-7 26-5 46 2v16H20z" fill="#4f8f35"/><path d="M42 16c12-5 24-4 36-1v15H34z" fill="#3b98c4"/><path d="M2 30c4-8 8-14 16-16h18c10 3 16 10 18 16z" fill="#4c8a35"/><path d="M8 20l5-4 6 4v10H8zM32 17l6-4 6 5v12H32z" fill="#d8733c"/><path d="M10 22h8v8h-8zM33 20h10v10H33z" fill="#e6b274"/><path d="M20 14l3-8 3-5 3 5v24h-9z" fill="#e5d6a6"/><path d="M15 20l6-4 6 4v10H15z" fill="#cf6c38"/><path d="M17 22h9v8h-9z" fill="#f0c890"/><ellipse cx="8" cy="8" rx="8" ry="4.500" fill="#a9c7da"/><circle cx="9" cy="5" r="4" fill="#c4dbe8"/><path d="M56 20q7-3 12 1t10 2" stroke="#3d8a3a" stroke-width="4" fill="none"/></svg>
  </div>
  <div class="apps">
    <span><svg viewBox="0 0 24 24"><path d="M4 4v3h10V4M4 10h10v8H4zM18 3v3M18 9v3M18 14v5" fill="none" stroke="#fff" stroke-width="1.600"/></svg></span>
    <span><svg viewBox="0 0 24 24"><path d="M2 2h8l2 3h12v17H2z" fill="#f5c445"/><path d="M2 8h22v14H2z" fill="#ffda6b"/><path d="M7 14h14v8H7z" fill="#3c8ede"/></svg></span>
    <span class="cur"><svg viewBox="0 0 24 24"><circle cx="12" cy="12" r="9" fill="none" stroke="#d63b16" stroke-width="4"/><path d="M10 3l4-3 1 22-4 2z" fill="#c6cdd3" stroke="#777" stroke-width=".6"/></svg></span>
    <span><svg viewBox="0 0 24 24"><path d="M7 1l15 2-5 20H1z" fill="#8cc3cf"/><path d="M9 2l11 2-3 6-10 1z" fill="#c4e5ea"/><path d="M22 3l1 2-5 19-1-1z" fill="#556"/></svg></span>
    <span><svg viewBox="0 0 24 24"><circle cx="12" cy="12" r="12" fill="#fbc116"/><path d="M12 12L1.600 6A12 12 0 0 0 11 24z" fill="#34a853"/><path d="M1.600 6A12 12 0 0 1 22.400 6H12v6z" fill="#ea4335"/><circle cx="12" cy="12" r="5.500" fill="#fff"/><circle cx="12" cy="12" r="4.300" fill="#4285f4"/></svg></span>
    <span><svg viewBox="0 0 24 24"><circle cx="12" cy="12" r="12" fill="#1b8df2"/><path d="M13 3l-7 11h5l-1 8 8-12h-5z" fill="#fff"/></svg></span>
    <span class="jee"><svg viewBox="0 0 24 24"><path d="M0 0h24v24H0z" fill="#5a4b78"/><circle cx="12" cy="11" r="8" fill="none" stroke="#2a2230" stroke-width="5" stroke-dasharray="3 2"/></svg><em>Java EE<br>IDE</em></span>
    <span><svg viewBox="0 0 24 24"><path d="M12 2h11v20H12z" fill="#f2f2f2"/><path d="M14 5h3M18 5h4M14 9h3M18 9h4M14 13h3M18 13h4M14 17h3M18 17h4" stroke="#1f7244" stroke-width="2"/><path d="M1 3l13-3v24L1 21z" fill="#1f7244"/><path d="M4 8l6 8M10 8l-6 8" stroke="#fff" stroke-width="2"/></svg></span>
    <span><svg viewBox="0 0 24 24"><circle cx="12" cy="12" r="12" fill="#2aa6ae"/><circle cx="12" cy="13" r="10" fill="#fff"/><path d="M5 9l3-4 6 0 5 6-2 10-4-2-5 1z" fill="#f4f4f4" stroke="#333"/><circle cx="9" cy="10" r="1.200"/><circle cx="14" cy="10" r="1.200"/><ellipse cx="11" cy="14" rx="2" ry="1.500"/></svg></span>
    <span><svg viewBox="0 0 24 24"><path d="M1 2h22v21H1z" fill="#2aa0f2"/><path d="M1 19l9-10 13 13v2H1z" fill="#0f4e9c"/><circle cx="17" cy="7" r="2.500" fill="#fff"/></svg></span>
  </div>
  <div class="tray">
    <svg class="sun" viewBox="0 0 24 24"><defs><linearGradient id="sg" x1="0" y1="0" x2="1" y2="1"><stop offset="0" stop-color="#f7c33c"/><stop offset="1" stop-color="#ee6f12"/></linearGradient></defs><circle cx="11" cy="14" r="10" fill="url(#sg)"/><circle cx="20" cy="5" r="3.500" fill="#d52b1e"/></svg>
    <span class="wx" data-w="63">-5°C 맑음</span>
    <svg class="ticons" viewBox="1640 1030 145 24"><g fill="none" stroke="#fff" stroke-width="1.400"><path d="M1647 1049l6-6 6 6M1697 1042h8v8h-8zM1705 1045l3-1v5l-3-1M1698 1039q4-2 8 0"/><circle cx="1701" cy="1046" r="1.800"/><path d="M1720 1041h12v9h-12M1718 1041h4v5h-4zM1719 1046v5M1741 1043h3l4-4v12l-4-4h-3zM1750 1043l5 5M1755 1043l-5 5"/></g><use href="#hnc" x="1670" y="1038" width="14" height="14"/><circle cx="1772" cy="1046" r="7" fill="#999"/><path d="M1769 1043l6 6M1775 1043l-6 6" stroke="#222" stroke-width="1.800"/></svg>
    <div class="clock"><span data-w="58">오전 10:54</span><span data-w="64">2022-11-30</span></div>
    <svg class="noti" viewBox="0 0 26 20"><path d="M0 3h16v13H0z" fill="#fff"/><path d="M3 6.500h10M3 9.500h10M3 12.500h6" stroke="#222"/><circle cx="17" cy="18" r="7.500" fill="#444" stroke="#888"/></svg>
    <i class="edge"></i>
  </div>
</footer>
</div>
<script src="fit.js"></script>
</body>
</html>
```
FILE: styles.css
```css
*{box-sizing:border-box}
body,h1,h2,p{margin:0}
body{background:#181a1b;font-family:"Open Sans","Noto Sans CJK KR",sans-serif;font-size:14px;color:#c8c3bc}
i{font-style:normal}
svg{display:block;flex:none}
use{color:inherit}
button{border:0;font-family:inherit;padding:0}
[data-w]{display:inline-block;white-space:nowrap;flex:none}
.defs{position:absolute}
.screen{position:relative;width:1914px;height:1051px;overflow:hidden}
.i16{width:16px;height:16px}
.i15{width:15px;height:15px}
.i9{width:9px;height:9px}
.grow{flex:1}

/* browser frame */
.browser{height:89px;background:#323639;border-bottom:1px solid #5d6164}
.tabstrip{display:flex;height:20px;align-items:flex-end;background:#3c4043;padding-left:4px;overflow:hidden}
.tab{flex:none;width:239px;height:34px;display:flex;align-items:center;padding:0 10px 0 12px;gap:8px;color:#a3a7aa;font-size:12px;border-right:1px solid #5c6063}
.tab .i9{margin-left:auto;color:#c0c3c6}
.tab .tx{line-height:20px}
.tab.active{background:#323639;color:#e8eaed;border-color:transparent}
.tab:nth-child(2){border-color:transparent;border-radius:0 0 8px 0}
.plus{width:12px;height:12px;margin:0 0 10px 17px}
.winctl{width:150px;height:14px;margin:0 16px 12px auto}
.toolbar{height:36px;display:flex;align-items:center}
.nav{width:90px;height:24px}
.omnibox{width:1640px;height:28px;margin-left:14px;background:#202124;border-radius:14px;display:flex;align-items:center;padding:0 10px 0 13px;gap:16px}
.lock{width:9px;height:13px}
.url{margin-left:-4px;line-height:20px;color:#9aa0a6;font-size:14px}
.url b{font-weight:400;color:#fff}
.exts{display:flex;align-items:center;gap:16px;padding-left:14px}
.avatar{width:22px;height:22px;margin-left:-3px}
.dots{width:4px;height:16px;margin-left:3px}
.bookmarks{height:28px;display:flex;align-items:center;gap:16.700px;padding-left:10px;color:#e8eaed;font-size:12px;line-height:20px}
.bookmarks a{display:flex;align-items:center;gap:8px}

/* page */
.viewport{display:flex;justify-content:space-between;height:962px;overflow:hidden}
.page{width:1200px;margin-left:348px}
.crumbs{display:flex;height:12px;align-items:center;gap:10px;padding-left:10px;font-size:14px;line-height:20px;color:#a39b8f}
.crumbs svg{width:8px;height:14px;margin:1px 1px 0 0;fill:none;stroke:#e8e6e3;stroke-width:1.300}
.crumbs .here{color:#b9b2a8}
.head{height:92px;display:flex;justify-content:space-between;align-items:center;padding-top:1px}
h1{font-size:25px;line-height:30px;color:#cdc8c0;margin-bottom:-1px}
.share{display:flex;gap:10px;align-items:center;margin-bottom:-4px}
.share svg{width:32px;height:32px}
.talk{position:relative}
.talk b{position:absolute;left:0;right:0;top:11px;text-align:center;font-size:7px;line-height:8px;color:#ffeb00}
.share button{width:91px;height:32px;border-radius:16px;background:#585f63;color:#d8d4cf;font-size:15px;line-height:30px}
.summary{height:170px;border:1px solid #3a3e40;border-top:3px solid #384c86;padding:23px 19px 0 20px}
h2{font-size:19px;line-height:26px;color:#c8c3bc}
.summary p{display:block;margin:14px 0 0 -1px;font-size:14px;line-height:22px;color:#c3beb6}
.votes{display:flex;gap:4px;margin:15px 0 0 -1px}
.vote{width:80px;height:32px;border:1px solid #55595b;display:flex;align-items:center;justify-content:center;gap:4px;font-weight:600;font-size:14px;padding-left:1px}
.vote>svg{width:18px;height:18px;margin-top:3px}
.vote.keep{width:63px;margin-left:5px}
.vote.keep svg{width:12px;height:16px}
.tabs{display:flex;margin:24px 0 0 -1px;height:48px}
.tabs>span{width:179px;border:1px solid #3a3e40;border-left:0;border-bottom:1px solid #2c5aa3;display:flex;align-items:center;justify-content:center;font-weight:600;font-size:14px;line-height:20px;padding-bottom:1px;color:#d0cbc4}
.tabs .on{width:180px;border:1px solid #264f92;border-bottom-color:#3a3e40;color:#4f94dd}
.tabs em{flex:1;border-bottom:1px solid #2c5aa3}
.note{margin-top:20px;height:123px;border:1px solid #3c4041;background:#1c1e1f;padding:16px 16px}
.note p{display:block;height:22.400px;line-height:22.400px;font-size:14px;color:#c3beb6}
.file{margin-top:16px;height:400px;border:1px solid #3c4041;background:#1d2122}
.filehead{height:73px;background:#181a1b;border-bottom:1px solid #3c4041;display:flex;padding-left:16px}
.csv{width:44px;height:24px;margin-top:22px;background:#06686f;color:#e4e2de;font-weight:700;font-size:12px;line-height:24px;text-align:center}
.fname{margin:19px 0 0 5px;font-size:16px;line-height:24px}
.dl{width:117px;height:40px;margin:16px 24px 0 auto;background:#2b5ba1;border:1px solid #244f90;display:flex;align-items:center;justify-content:center;gap:5px;color:#e6e3df;font-weight:500;font-size:15px;line-height:22px}
.dl svg{width:17px;height:17px;margin-top:3px}
.scroll{width:15px;background:#1f2324;padding-top:67px}
.thumb{height:321px;background:#454a4d}

/* drawn annotations */
.ink{position:absolute;left:0;top:0;width:1914px;height:700px}
.ink path{fill:none;stroke-linecap:round;stroke-linejoin:round;vector-effect:non-scaling-stroke}
.white path{stroke:#fff;stroke-width:4.500}
.green path{stroke:#26e600;stroke-width:3.800}
.red path{stroke:#e81c1c;stroke-width:4}
path.red{stroke:#e81c1c;stroke-width:4}

/* spreadsheet window */
.excel{position:absolute;left:282px;top:689px;width:1440px;height:362px;border:1px solid #8a8a8a;border-bottom:0;background:#e6e6e6;color:#444;font-size:12.500px}
.xtitle{position:relative;height:57px;background:#227447}
.deco{position:absolute;right:0;top:0;width:481px;height:57px}
.xbar{position:relative;height:33px;display:flex;padding:0}
.qat{width:170px;height:30px}
.xname{margin:8px 0 0 331px;line-height:20px;font-size:12.500px;color:#97c3a8}
.xctl{width:154px;height:14px;margin:8px 14px 0 auto}
.xtabs{position:relative;display:flex;height:24px;line-height:23px;color:#fff;padding-left:17px}
.xtabs b{width:39px;margin:0 0 0 22px;background:#f1f1f1;color:#227447;text-align:center;font-weight:500}
.t2{margin-left:15px}.t3{margin-left:30px}.t4{margin-left:29px}.t5{margin-left:31px}.t6{margin-left:30px}.t7{margin-left:29px}
.bulb{width:10px;height:14px;margin:5px 0 0 30px}
.tell{margin-left:6px;color:#9ecab0}
.xshare{margin-left:auto;width:69px;height:23px;line-height:22px;background:#115c30;display:flex;align-items:center;padding-left:7px;gap:3px}
.xshare i{margin-top:-1px}
.xshare svg{width:16px;height:16px;fill:none;stroke:#fff;stroke-width:1.500}
.ribbon{position:relative;display:flex;height:94px;background:#f1f1f1;border-bottom:1px solid #d2d0ce}
.grp{height:93px;flex:none;display:flex;flex-direction:column;background:linear-gradient(#d0d0d0,#d0d0d0) right 4px/1px 85px no-repeat}
.g1{width:143px}.g2{width:250px}.g3{width:295px}.g4{width:140px}.g5{width:143px}.g6{width:134px}.g7{width:194px}
.grp{background-position:right 4px;background-size:1px 85px}
.body{height:75px}
.row{display:flex}
.g5 .row{padding-left:2px}.g6 .row{padding-left:4px}.g7 .row{padding-left:8px}
.lab{display:flex;line-height:20px;height:18px;font-size:12px;color:#666;justify-content:center}
.lab span{margin:0 auto}
.lab svg{width:8px;height:8px;margin:7px 4px 0 4px}
.big{display:flex;flex-direction:column;align-items:center;padding-top:8px;line-height:16px}
.big>svg{width:30px;height:30px;margin-bottom:3px}
.g1 .big>svg{height:38px;margin:0}
.g1 .big{padding-top:7px}
.g1 .big .car{margin-top:7px}
.big>.car{margin-top:6px}
.wc{display:flex;align-items:center;gap:4px}
.list{padding-top:3px;width:89px}
.g1 .list{width:82px}
.list>div{height:23px;display:flex;align-items:center;gap:3px;line-height:20px}
.list svg{width:16px;height:16px}
.m9{margin-left:8px}.m4{margin-left:1px}
.car{width:7px;height:4px;flex:none;background:#666;clip-path:polygon(0 0,100% 0,50% 100%)}
.r1{display:flex;height:23px;margin:11px 0 0 4px}
.r2{display:flex;height:21px;margin:8px 0 0 4px}
.c{display:flex;align-items:center;justify-content:center;flex:none;line-height:20px}
.on.c{background:#c6c6c6}
.sep{width:1px;height:23px;background:#d2d2d2;flex:none}
.txt{margin-left:3px;line-height:22px}
.t-merge{margin-left:1px}
.combo{display:flex;align-items:center;justify-content:space-between;background:#fff;border:1px solid #c6c6c6;padding:0 4px 0 3px;line-height:21px;flex:none}
.w40{width:41px;margin-left:-1px}
.big.w40{margin:0;width:40px}
.w4{width:4px}.w9{width:9px}.w10{width:10px}.w11{width:11px}.w12{width:12px}.w17{width:17px}.w18{width:18px}.w20{width:20px}.w21{width:21px}.w22{width:22px}.w23{width:23px}.w24{width:24px}.w26{width:26px}.w27{width:28px}.w42{width:42px}.w44{width:44px}.w46{width:46px}.w50{width:50px}.w60{width:62px}.w131{width:131px}.w157{width:157px}
.w60+.list{margin-left:-2px}
.ga{font-size:11.500px;align-items:flex-end;flex-direction:row;padding:0;line-height:20px}
.ga.big{font-size:13px}
.ga svg,.ga.big>svg{width:5px;height:4px;margin:0 0 14px -2px}
.r2 b{font-size:11px}
.it{transform:skewX(-12deg)}
.fc{flex-direction:column;font-size:13px;line-height:16px;justify-content:flex-start}
.fc i{width:16px;height:4px;background:#f00}
.nc{flex-direction:column;font-size:9px;line-height:10px;font-weight:500}
.nc svg{width:9px;height:8px}
.pct{font-size:15px}
.dec{flex-direction:column;align-items:flex-end;font-size:8.500px;line-height:8px;font-weight:600}
.dec span{display:flex;align-items:center;white-space:nowrap}
.collapse{width:10px;height:7px;margin:81px 9px 0 auto}
.fbar{display:flex;height:43px;padding:10px 6px 6px 5px}
.fbar>span{height:28px;background:#fdfdfd;border:1px solid #c6c6c6;display:flex;align-items:center}
.nbox{width:102px;justify-content:space-between;padding:0 6px 0 6px;font-size:14px}
.fdots{width:2px;height:12px;margin:8px 14px 0 14px}
.fbtn{width:110px;padding:0 12px 0 11px;justify-content:space-between}
.fbtn svg{width:13px;height:12px}
.fbtn em{font-family:"Liberation Serif",serif;font-size:15px;font-weight:700;line-height:20px;color:#555}
.fbtn sub{font-size:10px;vertical-align:-2px}
.fval{flex:1;margin-left:2px;justify-content:space-between;padding:0 2px 3px 12px;font-size:15px}
.fval svg{width:9px;height:7px}
.sheetwrap{display:flex;height:200px}
.sheet{width:1417px;overflow:hidden;background:#fff}
.hr,.sr{display:grid;grid-template-columns:34px repeat(20,72px);width:1474px}
.hr{height:27px;background:#e6e6e6;border-bottom:1px solid #9b9b9b;color:#222;font-size:13px}
.hr span{border-right:1px solid #b5b5b5;text-align:center;line-height:25px;margin-top:1px}
.corner{background:linear-gradient(135deg,transparent 50%,#b1b1b1 50%) right 3px bottom 3px/14px 14px no-repeat}
.sr{height:22px}
.sr b{font-weight:400;font-size:13px;text-align:center;background:#e6e6e6;border-right:1px solid #9b9b9b;border-bottom:1px solid #c4c4c4;line-height:23px;color:#222}
.sr span{border-right:1px solid #d4d4d4;border-bottom:1px solid #d4d4d4;padding-left:3px;font-size:15.500px;line-height:21px;letter-spacing:.15px;word-spacing:1.300px;color:#000;overflow:hidden;white-space:nowrap}
.s2{grid-column:span 2}
.s4{grid-column:span 4}
.xscroll{width:21px;background:#e6e6e6;border-left:1px solid #c0c0c0;padding:8px 2px 0}
.xscroll i{display:block;height:180px;background:#d9d9d9;border-top:1px solid #ababab}

/* notification */
.toast{position:absolute;left:1536px;top:892px;width:363px;height:122px;background:linear-gradient(100deg,#3a3a3a 30%,#242424 65%,#262626);color:#fff;padding-left:17px}
.thead{display:flex;align-items:center;height:50px;padding:3px 22px 0 0;font-size:12px;line-height:20px}
.thead span{margin-left:8px}
.tx-close{width:10px;height:10px;margin:-2px 0 0 auto}
.tbody{display:flex;padding:3px 0 0 6px}
.info{width:46px;height:46px}
.tbody div{margin:-4px 0 0 24px}
.tbody strong{display:block;font-size:15px;line-height:21px}
.tbody p{display:block;font-size:15px;line-height:20px;color:#a3a3a3}

/* taskbar */
.taskbar{position:absolute;left:0;top:1026px;width:1914px;height:25px;overflow:hidden;display:flex;background:linear-gradient(90deg,#242424,#3a3a3a 20%,#404040 75%,#454545 80%,#262626 92%,#222)}
.start{width:44px;padding:12px 0 0 11px}
.start svg{width:17px;height:18px}
.search{width:344px;height:40px;border:1px solid #5b5b5b;background:#303030;display:flex;color:#d4d4d4;font-size:15px;line-height:37px;padding-left:14px}
.mag{width:13px;height:16px;margin-top:11px}
.search span{margin-left:12px}
.art{width:78px;height:30px;margin-left:auto}
.apps{display:flex}
.apps span{width:49px;height:40px;display:flex;justify-content:center;padding-top:8px}
.apps span svg{width:24px;height:24px}
.apps .cur{background:#5c5c5c}
.jee{position:relative}
.jee em{position:absolute;left:8px;right:8px;top:10px;text-align:center;font-size:7.500px;line-height:9px;font-weight:700;font-style:normal;color:#f08a24;white-space:nowrap}
.tray{display:flex;margin-left:auto;width:386px;color:#fff;font-size:14px}
.sun{width:24px;height:24px;margin-top:6px}
.wx{margin:9px 0 0 7px;line-height:20px}
.ticons{width:145px;height:24px;margin:4px 0 0 18px}
.clock{display:flex;flex-direction:column;align-items:center;margin:1px 0 0 5px;font-size:12.500px;line-height:19px;width:66px}
.noti{width:26px;height:20px;margin:9px 0 0 19px}
.edge{width:1px;background:#777;margin-left:8px}
```
FILE: fit.js
```js
// Tracks every label so that it fills its nominal width whichever font is installed.
document.querySelectorAll('[data-w]').forEach(function (el) {
  var natural = el.getBoundingClientRect().width;
  var block = getComputedStyle(el).display === 'block';
  if (block) {
    var range = document.createRange();
    range.selectNodeContents(el);
    natural = range.getBoundingClientRect().width;
  }
  var count = Array.from(el.textContent).length;
  el.style.letterSpacing = ((+el.dataset.w - natural) / count).toFixed(3) + 'px';
});
```
